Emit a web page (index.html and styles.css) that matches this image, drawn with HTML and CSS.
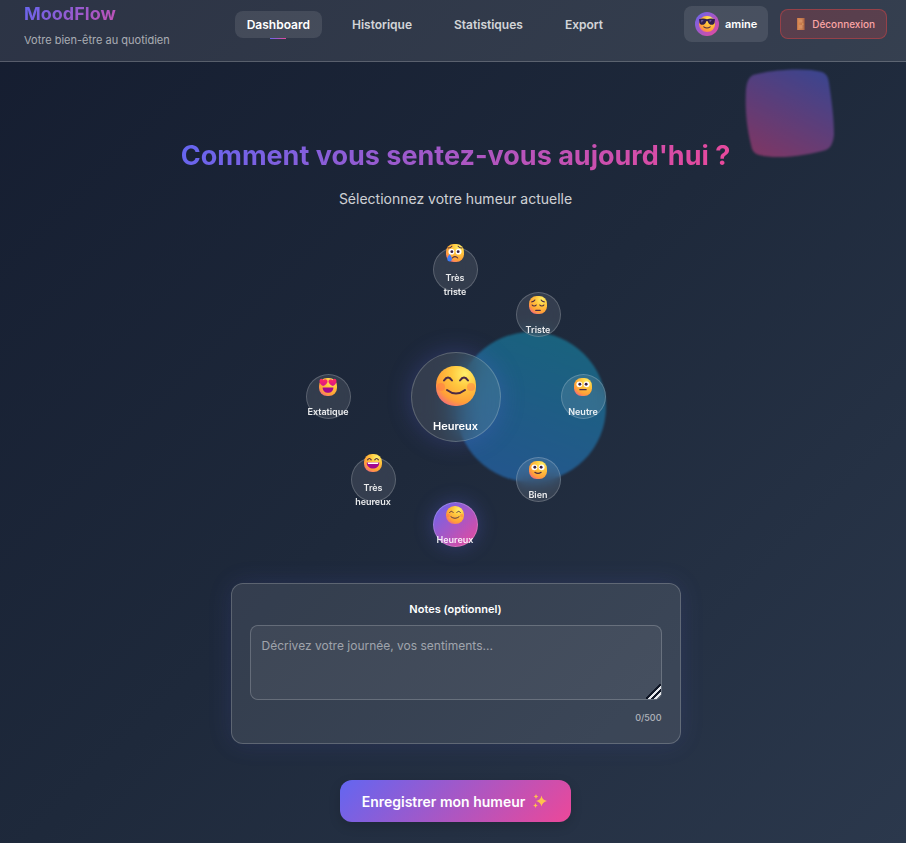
FILE: index.html
```html
<!DOCTYPE html>
<html lang="fr">
<head>
<meta charset="utf-8">
<meta name="viewport" content="width=device-width, initial-scale=1">
<title>MoodFlow</title>
<link rel="stylesheet" href="styles.css">
</head>
<body>
<svg class="defs" aria-hidden="true">
  <defs>
    <radialGradient id="skin" cx="0.72" cy="0.2" r="0.95">
      <stop offset="0" stop-color="#fff06a"/>
      <stop offset="0.35" stop-color="#ffc83e"/>
      <stop offset="0.75" stop-color="#ff9f38"/>
      <stop offset="1" stop-color="#f0608a"/>
    </radialGradient>
    <linearGradient id="heart" x1="0" y1="0" x2="0" y2="1">
      <stop offset="0" stop-color="#ff2a62"/>
      <stop offset="1" stop-color="#d6148a"/>
    </linearGradient>
    <linearGradient id="door" x1="0" y1="0" x2="1" y2="0">
      <stop offset="0" stop-color="#e08a50"/>
      <stop offset="1" stop-color="#b9714c"/>
    </linearGradient>
    <linearGradient id="blob" x1="0.75" y1="0" x2="0.25" y2="1">
      <stop offset="0" stop-color="#6366f1"/>
      <stop offset="1" stop-color="#ec4899"/>
    </linearGradient>
    <symbol id="smile" viewBox="0 0 40 40">
      <rect width="40" height="40" rx="19" fill="url(#skin)"/>
      <circle cx="5" cy="21" r="4" fill="#ff6b4e" opacity=".4"/><circle cx="35" cy="21" r="4" fill="#ff6b4e" opacity=".4"/>
      <path d="M8 14.500Q12 8.500 16 14.500M24 14.500Q28 8.500 32 14.500M11 24Q20 31 29 24" fill="none" stroke="#4a2a44" stroke-width="2" stroke-linecap="round"/>
    </symbol>
    <symbol id="cry" viewBox="0 0 40 40">
      <rect width="40" height="40" rx="17" fill="url(#skin)"/>
      <circle cx="12" cy="17" r="6.500" fill="#fff"/><circle cx="28" cy="17" r="6.500" fill="#fff"/>
      <circle cx="13" cy="17" r="3.200" fill="#3b2144"/><circle cx="27" cy="17" r="3.200" fill="#3b2144"/>
      <path d="M5 9c3 0 6-1 8-4M35 9c-3 0-6-1-8-4M14 31c3-4 9-4 12 0" fill="none" stroke="#4a2a44" stroke-width="2.400" stroke-linecap="round"/>
      <path d="M8 23c3 4 6 8 5 12-1 5-9 5-10 0-1-4 2-8 5-12z" fill="#3f7df5"/>
    </symbol>
    <symbol id="sad" viewBox="0 0 40 40">
      <rect width="40" height="40" rx="17" fill="url(#skin)"/>
      <path d="M6 13c4 0 6-2 7-4M34 13c-4 0-6-2-7-4M7 20c2 3 7 3 9 0M24 20c2 3 7 3 9 0M15 32h10" fill="none" stroke="#4a2a44" stroke-width="2.600" stroke-linecap="round"/>
    </symbol>
    <symbol id="neutral" viewBox="0 0 40 40">
      <rect width="40" height="40" rx="17" fill="url(#skin)"/>
      <circle cx="12" cy="14" r="6.500" fill="#fff"/><circle cx="28" cy="14" r="6.500" fill="#fff"/>
      <circle cx="13" cy="14" r="3.200" fill="#3b2144"/><circle cx="27" cy="14" r="3.200" fill="#3b2144"/>
      <path d="M13 26h14" stroke="#4a2a44" stroke-width="2.800" stroke-linecap="round"/>
    </symbol>
    <symbol id="good" viewBox="0 0 40 40">
      <rect width="40" height="40" rx="17" fill="url(#skin)"/>
      <circle cx="12" cy="14" r="6.500" fill="#fff"/><circle cx="28" cy="14" r="6.500" fill="#fff"/>
      <circle cx="13" cy="14" r="3.200" fill="#3b2144"/><circle cx="27" cy="14" r="3.200" fill="#3b2144"/>
      <path d="M13 25q7 5 14 0" fill="none" stroke="#4a2a44" stroke-width="2.600" stroke-linecap="round"/>
    </symbol>
    <symbol id="laugh" viewBox="0 0 40 40">
      <rect width="40" height="40" rx="18" fill="url(#skin)"/>
      <path d="M8 13q4-6 8 0M24 13q4-6 8 0" fill="none" stroke="#4a2a44" stroke-width="2.600" stroke-linecap="round"/>
      <path d="M6 19h28c0 18-28 18-28 0z" fill="#a3088f"/><path d="M8 19h24l-1 3H9z" fill="#fff"/>
    </symbol>
    <symbol id="love" viewBox="0 0 40 40">
      <rect width="40" height="40" rx="18" fill="url(#skin)"/>
      <path d="M8 21h24c0 16-24 16-24 0z" fill="#a3088f"/>
      <path d="M9 18C-2 12 0 1 6 2q3 0 4 3 3-4 7-1c5 4 0 11-8 14z" fill="url(#heart)"/>
      <path d="M31 18c11-6 9-17 3-16q-3 0-4 3-3-4-7-1c-5 4 0 11 8 14z" fill="url(#heart)"/>
    </symbol>
    <symbol id="cool" viewBox="0 0 40 40">
      <rect width="40" height="40" rx="19" fill="url(#skin)"/>
      <path d="M0 8q10-4 20 0 10-4 20 0l-1 9c-1 7-15 8-17-4h-4c-2 12-16 11-17 4z" fill="#30204f"/>
      <path d="M5 10h7l-6 7zM26 10h6l-5 6z" fill="#6b5a99"/>
      <path d="M12 27q8 6 16 0" fill="none" stroke="#4a2a44" stroke-width="2.600" stroke-linecap="round"/>
    </symbol>
  </defs>
</svg>

<div class="shapes" aria-hidden="true">
  <div class="shape-circle"></div>
  <svg class="shape-blob" viewBox="0 0 90 90"><path fill="url(#blob)" d="M8 7C24 2 60-1 77 4Q83 6 84 15C87 36 89 50 89 67Q88 79 81 82C65 87 33 92 14 87Q7 85 6 77C1 56 0 38 1 21Q2 10 8 7Z"/></svg>
</div>

<header class="header">
  <div class="brand">
    <span class="logo">MoodFlow</span>
    <span class="tagline">Votre bien-être au quotidien</span>
  </div>
  <nav class="nav">
    <a class="nav-link active" href="#dashboard">Dashboard</a>
    <a class="nav-link" href="#historique">Historique</a>
    <a class="nav-link" href="#statistiques">Statistiques</a>
    <a class="nav-link" href="#export">Export</a>
  </nav>
  <div class="actions">
    <div class="user">
      <span class="avatar"><svg class="face-avatar" aria-hidden="true"><use href="#cool"/></svg></span>
      <span>amine</span>
    </div>
    <button class="logout" type="button">
      <svg class="door" viewBox="0 0 8 13" aria-hidden="true"><path d="M0 0h8v13H0z" fill="#a65f42"/><path d="M0 0h7v13H0z" fill="url(#door)"/><path d="M1.500 1.500h4v3.500h-4zM1.500 7.500h4v4h-4z" fill="#d68f62"/><circle cx="6" cy="6.500" r=".6" fill="#ffd36a"/></svg>
      <span>Déconnexion</span>
    </button>
  </div>
</header>

<main class="main">
  <h1 class="title">Comment vous sentez-vous aujourd'hui ?</h1>
  <p class="subtitle">Sélectionnez votre humeur actuelle</p>

  <div class="wheel">
    <div class="current">
      <svg class="face-large" aria-hidden="true"><use href="#smile"/></svg>
      <span>Heureux</span>
    </div>
    <button class="mood mood-n" type="button"><svg class="face" aria-hidden="true"><use href="#cry"/></svg><span>Très triste</span></button>
    <button class="mood mood-ne" type="button"><svg class="face" aria-hidden="true"><use href="#sad"/></svg><span>Triste</span></button>
    <button class="mood mood-e" type="button"><svg class="face" aria-hidden="true"><use href="#neutral"/></svg><span>Neutre</span></button>
    <button class="mood mood-se" type="button"><svg class="face" aria-hidden="true"><use href="#good"/></svg><span>Bien</span></button>
    <button class="mood mood-s selected" type="button"><svg class="face" aria-hidden="true"><use href="#smile"/></svg><span>Heureux</span></button>
    <button class="mood mood-sw" type="button"><svg class="face" aria-hidden="true"><use href="#laugh"/></svg><span>Très heureux</span></button>
    <button class="mood mood-w" type="button"><svg class="face" aria-hidden="true"><use href="#love"/></svg><span>Extatique</span></button>
  </div>

  <section class="card">
    <label class="notes-label" for="notes">Notes (optionnel)</label>
    <textarea class="notes" id="notes" maxlength="500" placeholder="Décrivez votre journée, vos sentiments..."></textarea>
    <div class="counter">0/500</div>
  </section>

  <button class="save" type="submit">
    <span>Enregistrer mon humeur</span>
    <svg class="sparkles" viewBox="0 0 14 14" aria-hidden="true"><g fill="#ffc24d"><path d="M8.500 1.500q.8 4.500 5.500 5.500-4.700 1-5.500 5.500Q7.700 8 3 7q4.700-1 5.500-5.500z"/><path d="M3 0q.3 2.200 2.300 2.500Q3.300 2.800 3 5 2.700 2.800.7 2.500 2.700 2.200 3 0zM2.500 9q.3 2.200 2.300 2.500-2 .3-2.300 2.500-.3-2.200-2.300-2.500 2-.3 2.300-2.500z"/></g></svg>
  </button>
</main>
</body>
</html>
```
FILE: styles.css
```css
* {
  box-sizing: border-box;
}

body {
  position: relative;
  margin: 0;
  min-height: 100vh;
  background: linear-gradient(135deg, #151d30 0%, #1e293b 50%, #2b384c 100%);
  color: #fff;
  font-family: Inter, "Liberation Sans", sans-serif;
}

button,
textarea {
  font-family: inherit;
}

svg {
  display: block;
}

.defs {
  position: absolute;
  width: 0;
  height: 0;
}

/* Decorative background shapes */
.shapes {
  position: absolute;
  inset: 0;
  overflow: hidden;
  pointer-events: none;
}

.shape-circle {
  position: absolute;
  top: 332px;
  left: calc(50% + 3px);
  width: 150px;
  height: 150px;
  border-radius: 50%;
  background: linear-gradient(200deg, #149fbc, #2a7fe0);
  opacity: 0.5;
  filter: blur(1px);
}

.shape-blob {
  position: absolute;
  top: 68px;
  right: 71px;
  width: 90px;
  height: 90px;
  opacity: 0.45;
  filter: blur(1px);
}

/* Header */
.header {
  position: relative;
  display: flex;
  justify-content: space-between;
  align-items: flex-start;
  height: 62px;
  padding: 0 19px 0 24px;
  background: rgba(255, 255, 255, 0.1);
  border-bottom: 1px solid rgba(255, 255, 255, 0.2);
}

.brand {
  display: flex;
  flex-direction: column;
  padding-top: 1px;
  line-height: 26px;
}

.logo {
  align-self: flex-start;
  font-size: 18px;
  font-weight: 700;
  background: linear-gradient(135deg, #6366f1, #ec4899);
  background-size: 139px 100%;
  background-clip: text;
  color: transparent;
}

.tagline {
  color: rgba(255, 255, 255, 0.6);
  font-size: 11px;
}

.nav {
  display: flex;
  gap: 18px;
  margin: 11px 4px 0 0;
}

.nav-link {
  position: relative;
  padding: 0 12px;
  border-radius: 8px;
  color: rgba(255, 255, 255, 0.8);
  font-size: 12px;
  font-weight: 600;
  line-height: 27px;
  text-decoration: none;
}

.nav-link.active {
  background: rgba(255, 255, 255, 0.1);
  color: #fff;
}

.nav-link.active::after {
  content: "";
  position: absolute;
  bottom: -1px;
  left: 50%;
  width: 16px;
  height: 1px;
  transform: translateX(-50%);
  background: linear-gradient(135deg, #6366f1, #ec4899);
}

.actions {
  display: flex;
  align-items: center;
  gap: 12px;
  margin-top: 6px;
}

.user {
  display: flex;
  align-items: center;
  gap: 6px;
  height: 36px;
  padding: 0 11px;
  border-radius: 8px;
  background: rgba(255, 255, 255, 0.1);
  font-size: 11px;
  font-weight: 600;
}

.avatar {
  display: flex;
  align-items: center;
  justify-content: center;
  width: 24px;
  height: 24px;
  border-radius: 50%;
  background: linear-gradient(135deg, #6366f1, #ec4899);
}

.face-avatar {
  width: 16px;
  height: 16px;
}

.logout {
  display: flex;
  align-items: center;
  gap: 7px;
  height: 30px;
  padding: 0 11px 0 16px;
  border: 1px solid rgba(239, 68, 68, 0.4);
  border-radius: 8px;
  background: rgba(239, 68, 68, 0.2);
  color: #fca5a5;
  font-size: 10px;
  font-weight: 500;
}

.door {
  width: 8px;
  height: 12px;
}

/* Dashboard */
.main {
  position: relative;
  display: flex;
  flex-direction: column;
  align-items: center;
  padding: 76px 15px 20px 20px;
}

.title {
  margin: 0;
  font-size: 27px;
  font-weight: 700;
  line-height: 36px;
  background: linear-gradient(135deg, #6366f1, #ec4899);
  background-clip: text;
  color: transparent;
}

.subtitle {
  margin: 14px 0 37px;
  color: rgba(255, 255, 255, 0.8);
  font-size: 14px;
  line-height: 22px;
}

/* Mood wheel */
.wheel {
  position: relative;
  width: 300px;
  height: 300px;
}

.current,
.mood {
  position: absolute;
  display: flex;
  flex-direction: column;
  align-items: center;
  justify-content: center;
  border: 1px solid rgba(255, 255, 255, 0.2);
  border-radius: 50%;
  background: rgba(255, 255, 255, 0.1);
  color: #fff;
  font-weight: 600;
}

.current {
  top: 105px;
  left: 105px;
  width: 90px;
  height: 90px;
  box-shadow: 0 0 24px rgba(99, 102, 241, 0.25);
  backdrop-filter: blur(14px);
  font-size: 11px;
  line-height: 18px;
}

.face-large {
  width: 40px;
  height: 40px;
  margin: 7px 0 11px;
}

.mood {
  width: 45px;
  height: 45px;
  padding: 0;
  backdrop-filter: blur(8px);
  color: rgba(255, 255, 255, 0.9);
  font-size: 9px;
  line-height: 14px;
}

.face {
  flex: none;
  width: 18px;
  height: 18px;
  margin: 3px 0 9px;
}

.mood-n { top: 0; left: 127px; }
.mood-ne { top: 45px; left: 210px; }
.mood-e { top: 127px; left: 255px; }
.mood-se { top: 210px; left: 210px; }
.mood-s { top: 255px; left: 127px; }
.mood-sw { top: 210px; left: 45px; }
.mood-w { top: 127px; left: 0; }

.mood.selected {
  background: linear-gradient(135deg, #6366f1, #ec4899);
  background-origin: border-box;
  box-shadow: 0 0 20px rgba(99, 102, 241, 0.3);
}

/* Notes */
.card {
  width: 100%;
  max-width: 450px;
  margin-top: 36px;
  padding: 17px 18px 16px;
  border: 1px solid rgba(255, 255, 255, 0.2);
  border-radius: 12px;
  background: rgba(255, 255, 255, 0.1);
  box-shadow: 0 0 24px rgba(99, 102, 241, 0.13);
}

.notes-label {
  display: block;
  margin-bottom: 8px;
  font-size: 11px;
  font-weight: 600;
  line-height: 16px;
  text-align: center;
}

.notes {
  display: block;
  width: 100%;
  height: 75px;
  padding: 11px;
  border: 1px solid rgba(255, 255, 255, 0.2);
  border-radius: 8px;
  outline: none;
  background: rgba(255, 255, 255, 0.05);
  color: #fff;
  font-size: 12px;
  line-height: 18px;
  resize: vertical;
}

.notes::placeholder {
  color: rgba(255, 255, 255, 0.5);
}

.notes::-webkit-resizer {
  background: linear-gradient(135deg, transparent 46%, #111827 46% 54%, #e5e7eb 54% 64%, #111827 64% 76%, #e5e7eb 76% 84%, transparent 84%);
}

.counter {
  margin: 9px 0 1px;
  color: rgba(255, 255, 255, 0.6);
  font-size: 9px;
  font-weight: 500;
  line-height: 17px;
  text-align: right;
}

.save {
  display: flex;
  align-items: center;
  gap: 8px;
  height: 42px;
  margin-top: 36px;
  padding: 0 24px 0 22px;
  border: 0;
  border-radius: 12px;
  background: linear-gradient(135deg, #6366f1, #ec4899);
  box-shadow: 0 4px 12px rgba(0, 0, 0, 0.15);
  color: #fff;
  font-size: 14px;
  font-weight: 600;
}

.sparkles {
  width: 14px;
  height: 14px;
}
```
